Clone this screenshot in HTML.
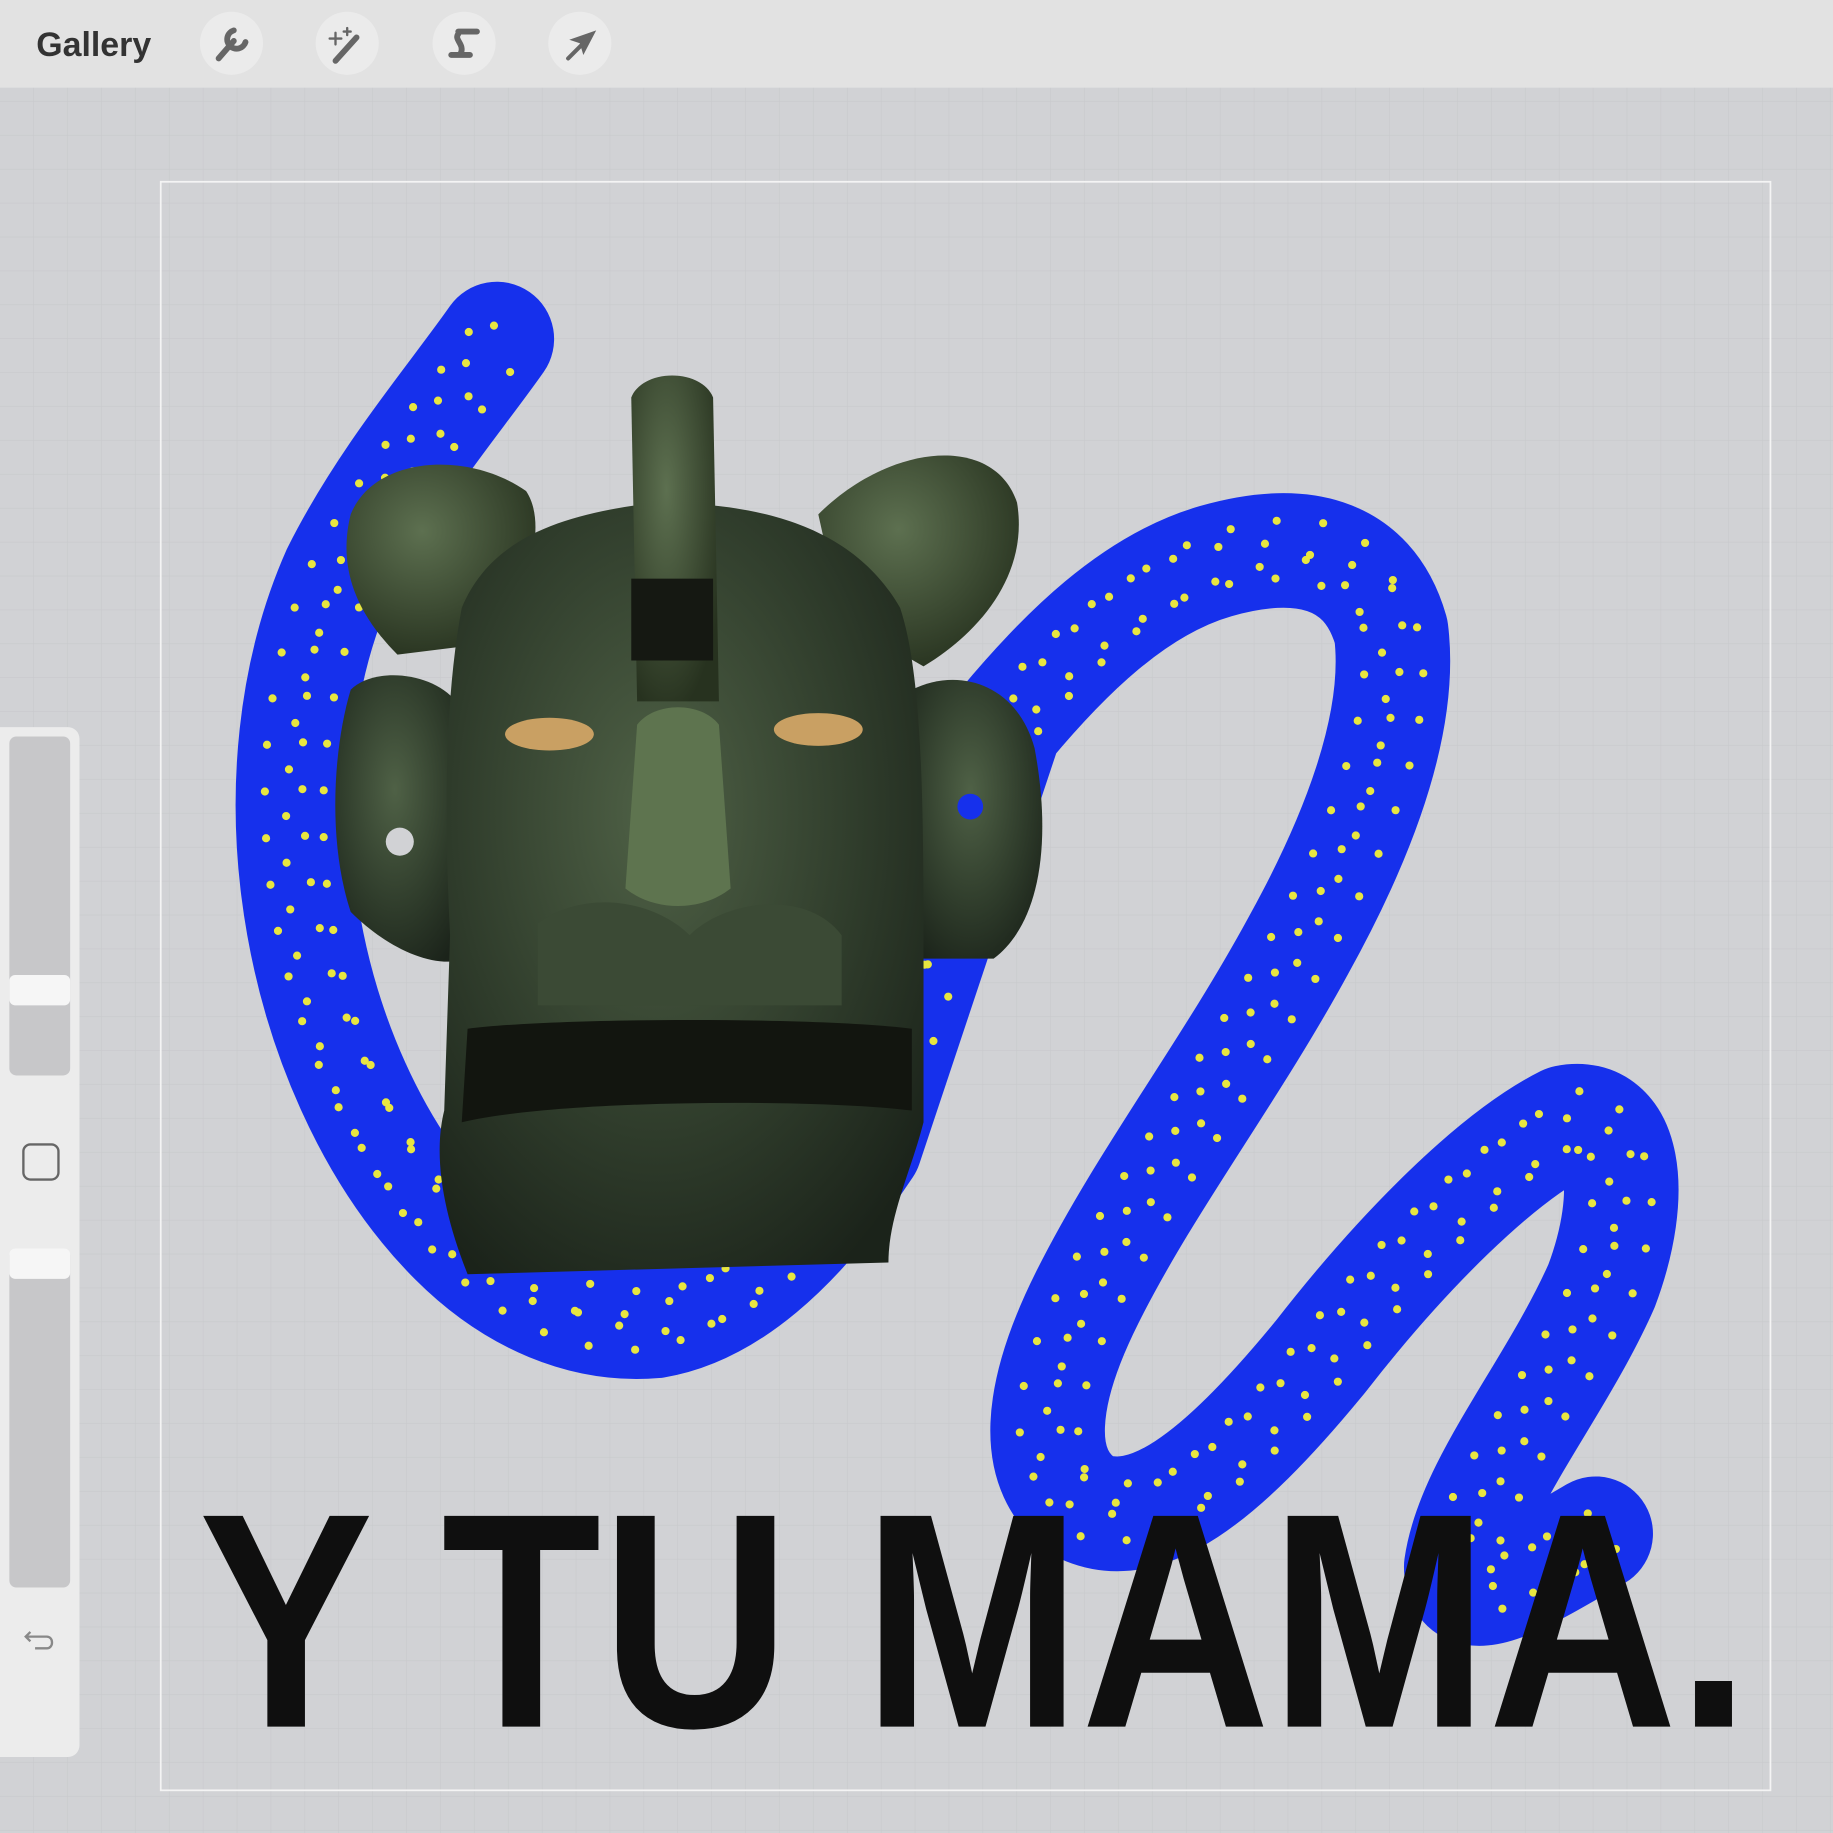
<!DOCTYPE html>
<html><head><meta charset="utf-8"><style>html,body{margin:0;padding:0;background:#d1d2d5;}svg{display:block}</style></head>
<body>
<svg width="1833" height="1833" viewBox="0 0 1568 1568" xmlns="http://www.w3.org/2000/svg">
<defs>
<pattern id="g" width="29" height="29" patternUnits="userSpaceOnUse"><path d="M29 0V29H0" fill="none" stroke="#c8c9cc" stroke-width="1"/></pattern>
<radialGradient id="st" cx="45%" cy="40%" r="70%"><stop offset="0" stop-color="#4f6146"/><stop offset="0.6" stop-color="#2f3c2b"/><stop offset="1" stop-color="#1b231a"/></radialGradient>
<radialGradient id="st2" cx="40%" cy="35%" r="70%"><stop offset="0" stop-color="#5d7050"/><stop offset="1" stop-color="#27321f"/></radialGradient>
<path id="p" d="M425 290 C390 340 330 410 290 490 C250 580 245 680 255 760 C270 880 320 990 390 1060 C440 1110 500 1135 560 1130 C620 1120 680 1070 740 980 L860 620 C910 560 970 500 1040 480 C1110 460 1170 470 1190 540 C1200 620 1160 720 1110 810 C1050 920 980 1010 930 1110 C890 1190 880 1260 930 1290 C980 1310 1040 1270 1130 1160 C1200 1070 1280 990 1340 960 C1390 950 1400 1020 1370 1100 C1330 1190 1260 1270 1250 1340 C1250 1380 1300 1350 1365 1312"/>
</defs>
<rect width="1568" height="1568" fill="#d1d2d5"/>
<rect width="1568" height="1568" fill="url(#g)"/>
<rect x="137.5" y="155.5" width="1377" height="1376" fill="none" stroke="#f4f4f4" stroke-width="1.5"/>

<g fill="none" stroke-linecap="round" stroke-linejoin="round">
<use href="#p" stroke="#1630ec" stroke-width="98"/>
<g stroke="#e8e640" stroke-width="7" stroke-dasharray="0 40">
<use href="#p" transform="translate(-24,-6)"/>
<use href="#p" transform="translate(26,8)" stroke-dashoffset="15"/>
<use href="#p" transform="translate(-6,24)" stroke-dashoffset="9"/>
<use href="#p" transform="translate(8,-26)" stroke-dashoffset="22"/>
</g>
</g>

<g>
<path d="M300 440 C320 390 400 385 450 420 C470 450 450 510 420 550 L340 560 C300 520 290 480 300 440Z" fill="url(#st2)"/>
<path d="M700 440 C760 380 850 370 870 430 C880 490 840 540 790 570 L720 530Z" fill="url(#st2)"/>
<path d="M300 590 C320 570 370 575 390 600 L400 820 C370 830 330 810 300 780 C280 720 285 640 300 590Z" fill="url(#st)"/>
<path d="M780 590 C820 570 870 585 885 640 C900 720 890 790 850 820 L780 820Z" fill="url(#st)"/>
<path d="M395 520 C420 460 480 440 560 430 C650 430 730 450 770 520 C790 580 790 700 790 820 L790 960 C780 1000 760 1040 760 1080 L400 1090 C380 1040 370 990 380 950 L385 800 C380 700 380 600 395 520Z" fill="url(#st)"/>
<path d="M540 340 C550 315 600 315 610 340 L615 600 L545 600Z" fill="url(#st2)"/>
<rect x="540" y="495" width="70" height="70" fill="#151812"/>
<path d="M400 880 C480 870 700 870 780 880 L780 950 C700 940 480 940 395 960Z" fill="#12150f"/>
<path d="M460 790 C500 760 560 770 590 800 C620 770 690 760 720 800 L720 860 L460 860Z" fill="#3b4a35"/>
<path d="M545 620 C560 600 600 600 615 620 L625 760 C600 780 560 780 535 760Z" fill="#5e744f"/>
<ellipse cx="470" cy="628" rx="38" ry="14" fill="#c9a063"/>
<ellipse cx="700" cy="624" rx="38" ry="14" fill="#c9a063"/>
<circle cx="342" cy="720" r="12" fill="#d1d2d5"/>
<circle cx="830" cy="690" r="11" fill="#1630ec"/>
</g>

<text x="170" y="1477" font-family="Liberation Sans, sans-serif" font-weight="bold" font-size="262" textLength="1327" lengthAdjust="spacingAndGlyphs" fill="#0f0f0f">Y TU MAMA.</text>

<rect width="1568" height="75" fill="#e2e2e2"/>
<text x="31" y="48" font-family="Liberation Sans, sans-serif" font-weight="bold" font-size="29" fill="#333">Gallery</text>
<g fill="#ebebeb"><circle cx="198" cy="37" r="27"/><circle cx="297" cy="37" r="27"/><circle cx="397" cy="37" r="27"/><circle cx="496" cy="37" r="27"/></g>
<g stroke="#666" stroke-linecap="round" fill="none">
<path d="M187 50 L200 35" stroke-width="5"/><path d="M200 26 A8 8 0 1 0 210 36" stroke-width="5"/>
<path d="M287 52 L305 32" stroke-width="5"/><path d="M287 28 L287 38 M282 33 L292 33 M297 24 L297 30 M294 27 L300 27" stroke-width="2"/>
<path d="M392 27 L408 27 M392 29 C388 34 398 38 394 46 M386 47 L402 47" stroke-width="5"/>
<path d="M486 50 L503 33" stroke-width="3.5"/>
</g>
<path d="M510 26 L499 47 L496 37 L487 34Z" fill="#666"/>

<rect x="-10" y="622" width="78" height="881" rx="10" fill="#ececec"/>
<rect x="8" y="630" width="52" height="290" rx="6" fill="#c7c7c9"/>
<rect x="8" y="834" width="52" height="26" rx="5" fill="#f6f6f6"/>
<rect x="20" y="979" width="30" height="30" rx="6" fill="none" stroke="#666" stroke-width="2"/>
<rect x="8" y="1068" width="52" height="290" rx="6" fill="#c7c7c9"/>
<rect x="8" y="1068" width="52" height="26" rx="5" fill="#f6f6f6"/>
<path d="M26 1396 L22 1400 L26 1404 M22 1400 L40 1400 C46 1400 46 1410 40 1410 L30 1410" fill="none" stroke="#888" stroke-width="2"/>
</svg>
</body></html>
